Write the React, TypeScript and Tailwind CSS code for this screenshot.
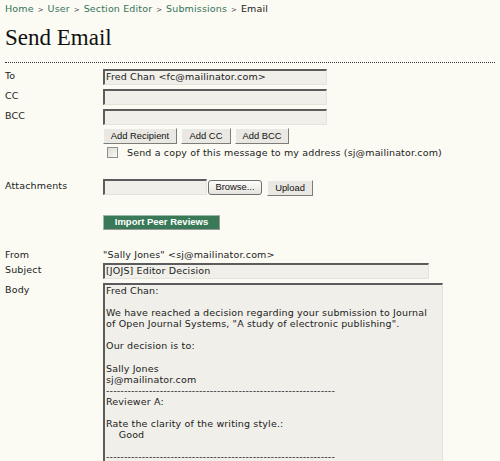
import React from 'react';

const sans = "font-['DejaVu_Sans',Verdana,sans-serif]";
const btnFont = "font-['Liberation_Sans',Arial,sans-serif]";
const txt = 'text-[9.5px] tracking-[0.15px] leading-[11px] text-[#222]';

const inputCls =
  'h-[16px] bg-[#f0efe9] border-t-2 border-l-2 border-t-[#5c5c5c] border-l-[#5c5c5c] border-r border-b border-r-[#e4e3dc] border-b-[#e4e3dc] pl-[1px] text-[9.5px] tracking-[0.15px] leading-[12px] text-[#222] whitespace-nowrap overflow-hidden';

const btnCls = `h-[16px] bg-[#e9e8e2] border border-t-[#fafaf7] border-l-[#fafaf7] border-r-[#7d7d78] border-b-[#7d7d78] ${btnFont} text-[9.4px] text-[#111] flex items-center justify-center`;

const Row = ({ label, children, top = 'pt-[1px]' }: { label: string; children: React.ReactNode; top?: string }) => (
  <div className="flex">
    <div className={`w-[98px] shrink-0 ${txt} ${top}`}>{label}</div>
    <div className="flex-1 min-w-0">{children}</div>
  </div>
);

const rule = '-'.repeat(64);

const body = `Fred Chan:

We have reached a decision regarding your submission to Journal
of Open Journal Systems, "A study of electronic publishing".

Our decision is to:

Sally Jones
sj@mailinator.com
${rule}
Reviewer A:

Rate the clarity of the writing style.:
    Good

${rule}`;

const Crumb = ({ children }: { children: React.ReactNode }) => (
  <span className="text-[#35735a]">{children}</span>
);
const Sep = () => <span className="text-[#444] text-[7px] tracking-normal mx-[4px]">&gt;</span>;

export default function App() {
  return (
    <div className={`min-h-[461px] w-[500px] bg-[#fbfbf3] px-[5px] overflow-hidden ${sans}`}>
      <div className={`pt-[3px] ${txt}`}>
        <Crumb>Home</Crumb>
        <Sep />
        <Crumb>User</Crumb>
        <Sep />
        <Crumb>Section Editor</Crumb>
        <Sep />
        <Crumb>Submissions</Crumb>
        <Sep />
        <span>Email</span>
      </div>
      <h1 className="mt-[8px] font-['Liberation_Serif','Times_New_Roman',serif] text-[23px] leading-[27px] text-[#111]">
        Send Email
      </h1>
      <div className="mt-[11px] border-t border-dotted border-[#333]" />

      <div className="mt-[6px] flex flex-col">
        <Row label="To">
          <div className={`${inputCls} w-[224px]`}>Fred Chan &lt;fc@mailinator.com&gt;</div>
        </Row>
        <div className="mt-[4px]">
          <Row label="CC">
            <div className={`${inputCls} w-[224px]`} />
          </Row>
        </div>
        <div className="mt-[4px]">
          <Row label="BCC">
            <div className={`${inputCls} w-[224px]`} />
          </Row>
        </div>
        <div className="mt-[3px] ml-[98px] flex gap-[4px]">
          <div className={`${btnCls} w-[74px]`}>Add Recipient</div>
          <div className={`${btnCls} w-[50px]`}>Add CC</div>
          <div className={`${btnCls} w-[54px]`}>Add BCC</div>
        </div>
        <div className="mt-[3px] ml-[102px] flex items-center h-[11px] gap-[9px]">
          <div className="w-[11px] h-[11px] shrink-0 border border-[#8e8f8f] bg-gradient-to-br from-[#dcdcd7] to-[#f8f8f4]" />
          <span className={`${txt} whitespace-nowrap`}>
            Send a copy of this message to my address (sj@mailinator.com)
          </span>
        </div>

        <div className="mt-[21px]">
          <Row label="Attachments">
            <div className="flex items-start">
              <div className={`${inputCls} w-[104px]`} />
              <div className={`ml-[1px] mt-[1px] h-[15px] w-[54px] rounded-[3px] border border-[#707070] bg-gradient-to-b from-[#fdfdfb] to-[#e4e3dc] ${btnFont} text-[9.4px] text-[#111] flex items-center justify-center`}>
                Browse...
              </div>
              <div className={`${btnCls} ml-[5px] mt-[1px] h-[15px] w-[46px]`}>Upload</div>
            </div>
          </Row>
        </div>

        <div className="mt-[19px] ml-[98px]">
          <div className={`h-[15px] w-[117px] bg-[#3a7957] border border-t-[#9bb9a8] border-l-[#9bb9a8] border-r-[#9a9a94] border-b-[#9a9a94] ${btnFont} font-bold text-[9.5px] text-white flex items-center justify-center`}>
            Import Peer Reviews
          </div>
        </div>

        <div className="mt-[19px]">
          <Row label="From" top="pt-0">
            <div className={txt}>"Sally Jones" &lt;sj@mailinator.com&gt;</div>
          </Row>
        </div>
        <div className="mt-[3px]">
          <Row label="Subject">
            <div className={`${inputCls} w-[326px]`}>[JOJS] Editor Decision</div>
          </Row>
        </div>
        <div className="mt-[4px]">
          <Row label="Body">
            <div className="w-[340px] h-[181px] bg-[#f0efe9] border-t-2 border-l-2 border-t-[#5c5c5c] border-l-[#5c5c5c] border-r border-r-[#e4e3dc] pl-[1px] text-[9.5px] tracking-[0.15px] leading-[11.1px] text-[#222] whitespace-pre overflow-hidden">
              {body}
            </div>
          </Row>
        </div>
      </div>
    </div>
  );
}
